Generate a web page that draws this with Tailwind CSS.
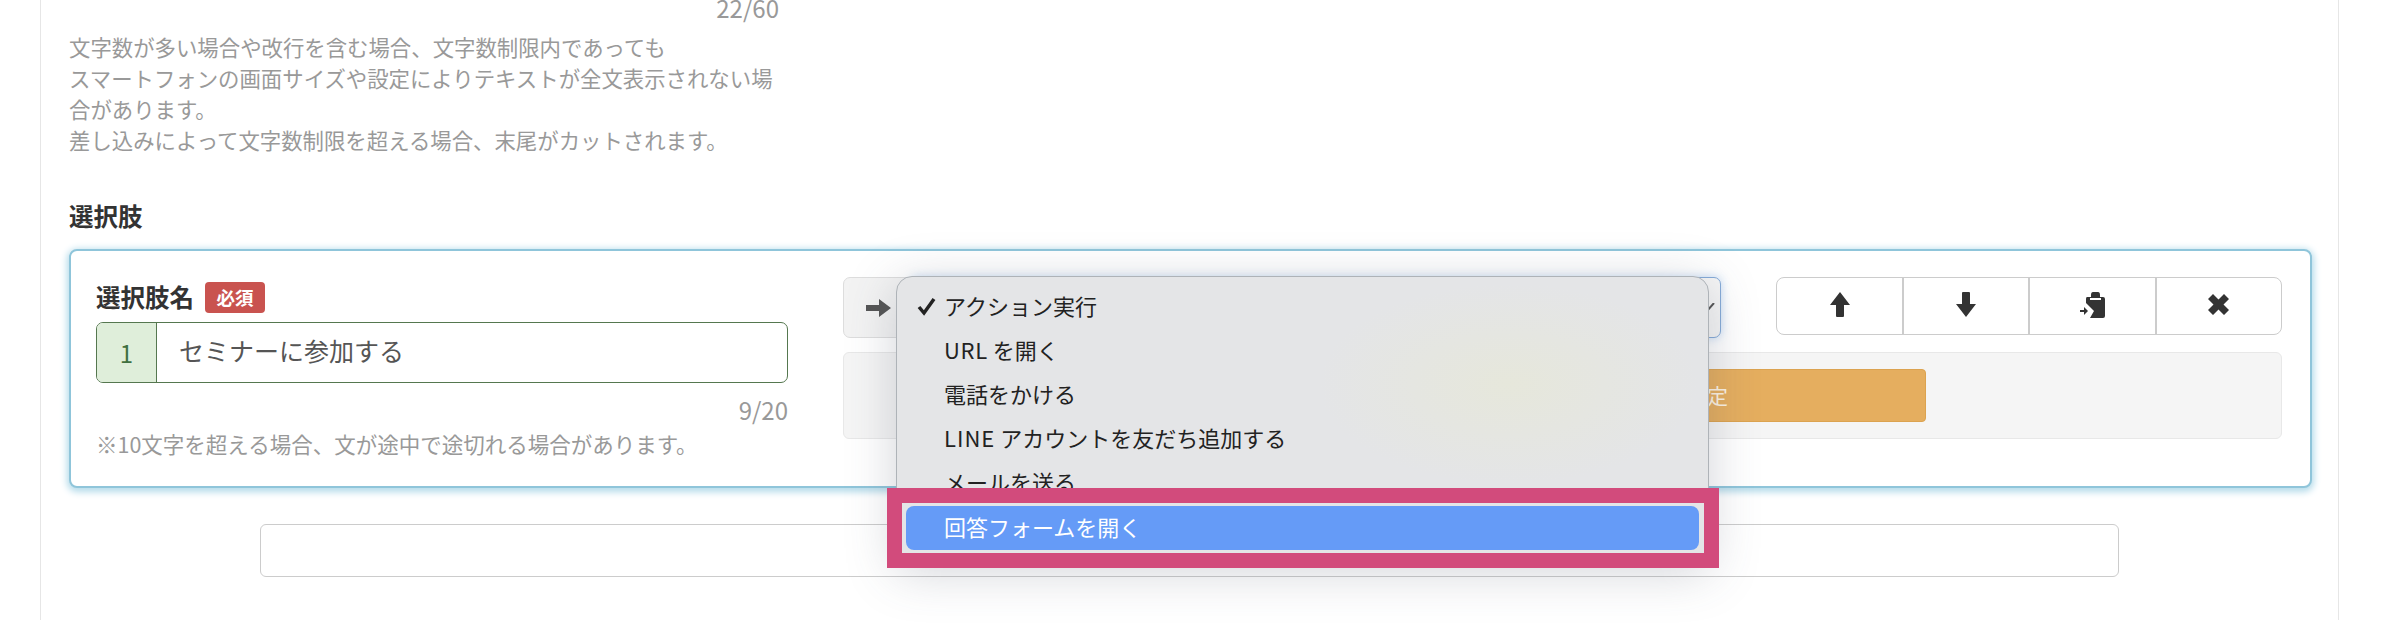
<!DOCTYPE html>
<html lang="ja">
  <head>
    <meta charset="UTF-8" />
    <title>選択肢の編集</title>
    <script src="https://cdn.jsdelivr.net/npm/@tailwindcss/browser@4"></script>
  </head>
  <body class="relative w-[2386px] h-[628px] overflow-hidden bg-white font-['Noto_Sans_CJK_JP',sans-serif]">
    <div class="ml-[40px] w-[2299px] h-[628px] border-x border-[#e6e6e6] pl-[28px] pr-[26px] bg-white">
      <!-- Message hint -->
      <div class="w-[710px] -mt-[8px] pt-0 text-right text-[24px] leading-[31px] text-[#999]">22/60</div>
      <p class="mt-[8px] text-[21.4px] leading-[31px] text-[#999] w-[710px]">
        文字数が多い場合や改行を含む場合、文字数制限内であっても<br />
        スマートフォンの画面サイズや設定によりテキストが全文表示されない場<br />
        合があります。<br />
        差し込みによって文字数制限を超える場合、末尾がカットされます。
      </p>

      <h2 class="mt-[45px] h-[32px] text-[24.5px] leading-[32px] font-bold text-[#333]">選択肢</h2>

      <!-- Choice card -->
      <div class="mt-[17px] h-[239px] flex gap-[55px] border-2 border-[#8fc5da] rounded-[8px] pl-[25px] pr-[27px] pt-[26px] shadow-[0_2px_7px_2px_#b4dbea] bg-white">
        <div class="w-[692px] pt-[5px]">
          <div class="flex items-center h-[31px]">
            <span class="-mt-[3px] text-[24.5px] leading-[31px] font-bold text-[#333]">選択肢名</span>
            <span class="ml-[11px] w-[60px] h-[31px] flex items-center justify-center rounded-[4px] bg-[#c9534f] text-white text-[18.5px] font-bold">必須</span>
          </div>
          <div class="mt-[9px] h-[61px] flex border border-[#55774f] rounded-[7px] overflow-hidden">
            <div class="w-[60px] flex items-center justify-center bg-[#dfeeda] border-r border-[#55774f] text-[24px] text-[#3f7040]">1</div>
            <div class="flex-1 pl-[22px] pb-[3px] flex items-center text-[25px] text-[#555]">セミナーに参加する</div>
          </div>
          <div class="mt-[11px] text-right text-[24px] leading-[31px] text-[#999]">9/20</div>
          <p class="mt-[3px] text-[21.5px] leading-[31px] text-[#999]">※10文字を超える場合、文が途中で途切れる場合があります。</p>
        </div>

        <div class="w-[1439px]">
          <div class="flex gap-[55px]">
            <div class="w-[879px] h-[61px] flex">
              <div class="w-[70px] flex items-center justify-center bg-[#f3f3f3] border border-[#ddd] rounded-l-[7px] text-[#555]">
                <svg class="w-[25px] h-[20px]" viewBox="0 0 25 20"><path fill="#555" d="M0 7h13V1l12 9-12 9v-6H0z" /></svg>
              </div>
              <div class="relative flex-1 flex items-center bg-[#f6f6f6] border border-[#86abd8] rounded-r-[7px] shadow-[0_0_10px_rgba(120,170,230,0.45)]">
                <svg class="absolute right-[4px] top-[25px] w-[16px] h-[10px]" viewBox="0 0 16 10"><path fill="none" stroke="#555" stroke-width="2" d="M1 1l6 7 7-8" /></svg>
              </div>
            </div>
            <!-- Row tools -->
            <div class="w-[506px] h-[58px] flex bg-white border border-[#ccc] rounded-[8px]">
              <button class="flex-1 flex items-center justify-center border-r-2 border-[#ccc]">
                <svg class="w-[20px] h-[25px] -mt-[3px]" viewBox="0 0 20 25"><path fill="#333" d="M10 0l10 13h-6v11q0 1-1 1H7q-1 0-1-1V13H0z" /></svg>
              </button>
              <button class="flex-1 flex items-center justify-center border-r-2 border-[#ccc]">
                <svg class="w-[20px] h-[25px] -mt-[3px]" viewBox="0 0 20 25"><path fill="#333" d="M10 25L0 12h6V1q0-1 1-1h6q1 0 1 1v11h6z" /></svg>
              </button>
              <button class="flex-1 flex items-center justify-center border-r-2 border-[#ccc]">
                <svg class="w-[25px] h-[26px] -mt-[2px]" viewBox="0 0 25 26"><path fill="#333" fill-rule="evenodd" d="M7 5h4V3q0-3 2-3h5q2 0 2 3v2h3q2 0 2 2v17q0 2-2 2H10l4-7-8-8V7q0-2 1-2zm3 1v2h11V6zM0 18h4v-3l4 4-4 4v-3H0z" /></svg>
              </button>
              <button class="flex-1 flex items-center justify-center">
                <svg class="w-[21px] h-[21px] -mt-[3px]" viewBox="0 0 21 21"><path fill="#333" d="M5 0l5.500 5.500L16 0l5 5-5.500 5.500L21 16l-5 5-5.500-5.500L5 21l-5-5 5.500-5.500L0 5z" /></svg>
              </button>
            </div>
          </div>
          <div class="mt-[14px] h-[87px] flex items-center bg-[#f5f5f5] border border-[#e8e8e8] rounded-[6px] pl-[354px]">
            <div class="w-[728px] h-[53px] flex items-center justify-end pr-[197px] bg-[#e5ae5f] border border-[#dca350] rounded-[4px] text-[21px] text-[#fdf3e2]">アクションを設定</div>
          </div>
        </div>
      </div>

      <!-- Add choice -->
      <div class="mt-[36px] ml-[191px] w-[1859px] h-[53px] border border-[#ccc] rounded-[6px] bg-white"></div>
    </div>

    <!-- Native select popup -->
    <div class="absolute left-[896px] top-[276px] w-[813px] h-[287px] pt-[6px] border border-[#aeb3b8] rounded-t-[16px] bg-[#e4e5e7] shadow-[0_8px_50px_rgba(70,80,100,0.25)] bg-[radial-gradient(ellipse_190px_100px_at_612px_107px,#e6e7db,#e4e5e7)] text-[22px] text-[#222]">
      <div class="h-[44px] mx-[9px] pl-[11px] flex items-center">
        <svg class="w-[19px] h-[19px] mr-[8px] mt-[3px]" viewBox="0 0 19 19"><path fill="none" stroke="#222" stroke-width="3.500" d="M2 10l5 6L17 2" /></svg>
        <span>アクション実行</span>
      </div>
      <div class="h-[44px] mx-[9px] pl-[38px] flex items-center"><span><span class="tracking-[0.7px]">URL</span> を開く</span></div>
      <div class="h-[44px] mx-[9px] pl-[38px] flex items-center">電話をかける</div>
      <div class="h-[44px] mx-[9px] pl-[38px] flex items-center"><span><span class="tracking-[1px]">LINE</span> アカウントを友だち追加する</span></div>
      <div class="h-[44px] mx-[9px] pl-[38px] flex items-center">メールを送る</div>
      <div class="relative top-[3px] h-[44px] mx-[9px] pl-[38px] pb-[3px] flex items-center rounded-[8px] bg-[#659bf7] text-white">回答フォームを開く</div>
    </div>

    <!-- Highlight annotation -->
    <div class="absolute left-[887px] top-[488px] w-[832px] h-[80px] border-[15px] border-[#d24b7c]"></div>
  </body>
</html>
